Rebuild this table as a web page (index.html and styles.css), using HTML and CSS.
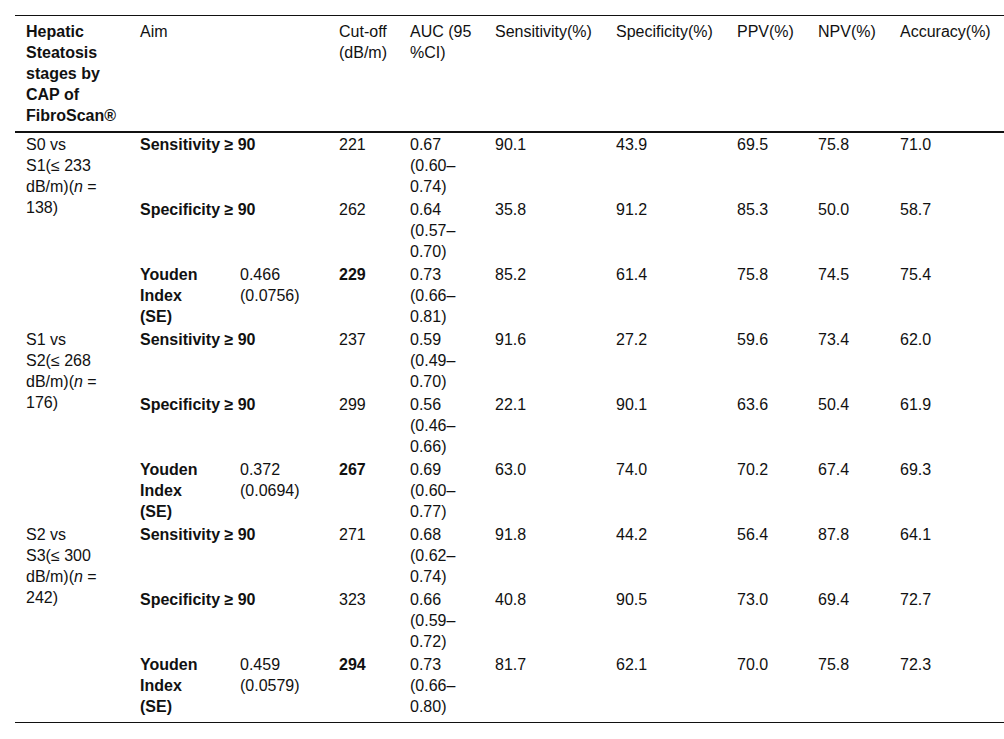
FILE: index.html
```html
<!DOCTYPE html>
<html lang="en">
<head>
<meta charset="utf-8">
<title>Hepatic steatosis CAP cut-offs</title>
<link rel="stylesheet" href="styles.css">
</head>
<body>
<table class="data">
  <colgroup>
    <col class="c-stage">
    <col class="c-aim">
    <col class="c-sub">
    <col class="c-cut">
    <col class="c-auc">
    <col class="c-sens">
    <col class="c-spec">
    <col class="c-ppv">
    <col class="c-npv">
    <col class="c-acc">
  </colgroup>
  <thead>
    <tr>
      <th class="b">Hepatic<br>Steatosis<br>stages by<br>CAP of<br>FibroScan®</th>
      <th colspan="2">Aim</th>
      <th>Cut-off<br>(dB/m)</th>
      <th>AUC (95<br>%CI)</th>
      <th>Sensitivity(%)</th>
      <th>Specificity(%)</th>
      <th>PPV(%)</th>
      <th>NPV(%)</th>
      <th>Accuracy(%)</th>
    </tr>
  </thead>
  <tbody>
    <tr>
      <td rowspan="3">S0 vs<br>S1(≤ 233<br>dB/m)(<i>n</i> =<br>138)</td>
      <td colspan="2" class="b">Sensitivity ≥ 90</td>
      <td>221</td><td>0.67<br>(0.60–<br>0.74)</td><td>90.1</td><td>43.9</td><td>69.5</td><td>75.8</td><td>71.0</td>
    </tr>
    <tr>
      <td colspan="2" class="b">Specificity ≥ 90</td>
      <td>262</td><td>0.64<br>(0.57–<br>0.70)</td><td>35.8</td><td>91.2</td><td>85.3</td><td>50.0</td><td>58.7</td>
    </tr>
    <tr>
      <td class="b">Youden<br>Index<br>(SE)</td><td>0.466<br>(0.0756)</td>
      <td class="b">229</td><td>0.73<br>(0.66–<br>0.81)</td><td>85.2</td><td>61.4</td><td>75.8</td><td>74.5</td><td>75.4</td>
    </tr>
    <tr>
      <td rowspan="3">S1 vs<br>S2(≤ 268<br>dB/m)(<i>n</i> =<br>176)</td>
      <td colspan="2" class="b">Sensitivity ≥ 90</td>
      <td>237</td><td>0.59<br>(0.49–<br>0.70)</td><td>91.6</td><td>27.2</td><td>59.6</td><td>73.4</td><td>62.0</td>
    </tr>
    <tr>
      <td colspan="2" class="b">Specificity ≥ 90</td>
      <td>299</td><td>0.56<br>(0.46–<br>0.66)</td><td>22.1</td><td>90.1</td><td>63.6</td><td>50.4</td><td>61.9</td>
    </tr>
    <tr>
      <td class="b">Youden<br>Index<br>(SE)</td><td>0.372<br>(0.0694)</td>
      <td class="b">267</td><td>0.69<br>(0.60–<br>0.77)</td><td>63.0</td><td>74.0</td><td>70.2</td><td>67.4</td><td>69.3</td>
    </tr>
    <tr>
      <td rowspan="3">S2 vs<br>S3(≤ 300<br>dB/m)(<i>n</i> =<br>242)</td>
      <td colspan="2" class="b">Sensitivity ≥ 90</td>
      <td>271</td><td>0.68<br>(0.62–<br>0.74)</td><td>91.8</td><td>44.2</td><td>56.4</td><td>87.8</td><td>64.1</td>
    </tr>
    <tr>
      <td colspan="2" class="b">Specificity ≥ 90</td>
      <td>323</td><td>0.66<br>(0.59–<br>0.72)</td><td>40.8</td><td>90.5</td><td>73.0</td><td>69.4</td><td>72.7</td>
    </tr>
    <tr class="last">
      <td class="b">Youden<br>Index<br>(SE)</td><td>0.459<br>(0.0579)</td>
      <td class="b">294</td><td>0.73<br>(0.66–<br>0.80)</td><td>81.7</td><td>62.1</td><td>70.0</td><td>75.8</td><td>72.3</td>
    </tr>
  </tbody>
</table>
</body>
</html>
```

FILE: styles.css
```css
html, body {
  margin: 0;
  padding: 0;
  background: #fff;
}
body {
  padding: 15px 0 0 15px;
  font-family: "Liberation Sans", Arial, sans-serif;
  font-size: 16px;
  line-height: 21px;
  color: #111;
}
.data {
  width: 989px;
  table-layout: fixed;
  border-collapse: collapse;
  border-top: 1px solid #111;
  border-bottom: 1px solid #111;
}
.c-stage { width: 114px; }
.c-aim { width: 100px; }
.c-sub { width: 99px; }
.c-cut { width: 71px; }
.c-auc { width: 85px; }
.c-sens { width: 121px; }
.c-spec { width: 121px; }
.c-ppv { width: 81px; }
.c-npv { width: 82px; }
.c-acc { width: 115px; }
.data th,
.data td {
  text-align: left;
  vertical-align: top;
  font-weight: normal;
  padding: 1px 9px 1px 11px;
}
.data thead tr {
  border-bottom: 2px solid #111;
}
.data th {
  padding-top: 5px;
  padding-bottom: 5px;
}
.data .b {
  font-weight: bold;
}
.data tr.last td {
  padding-bottom: 5px;
}
```
